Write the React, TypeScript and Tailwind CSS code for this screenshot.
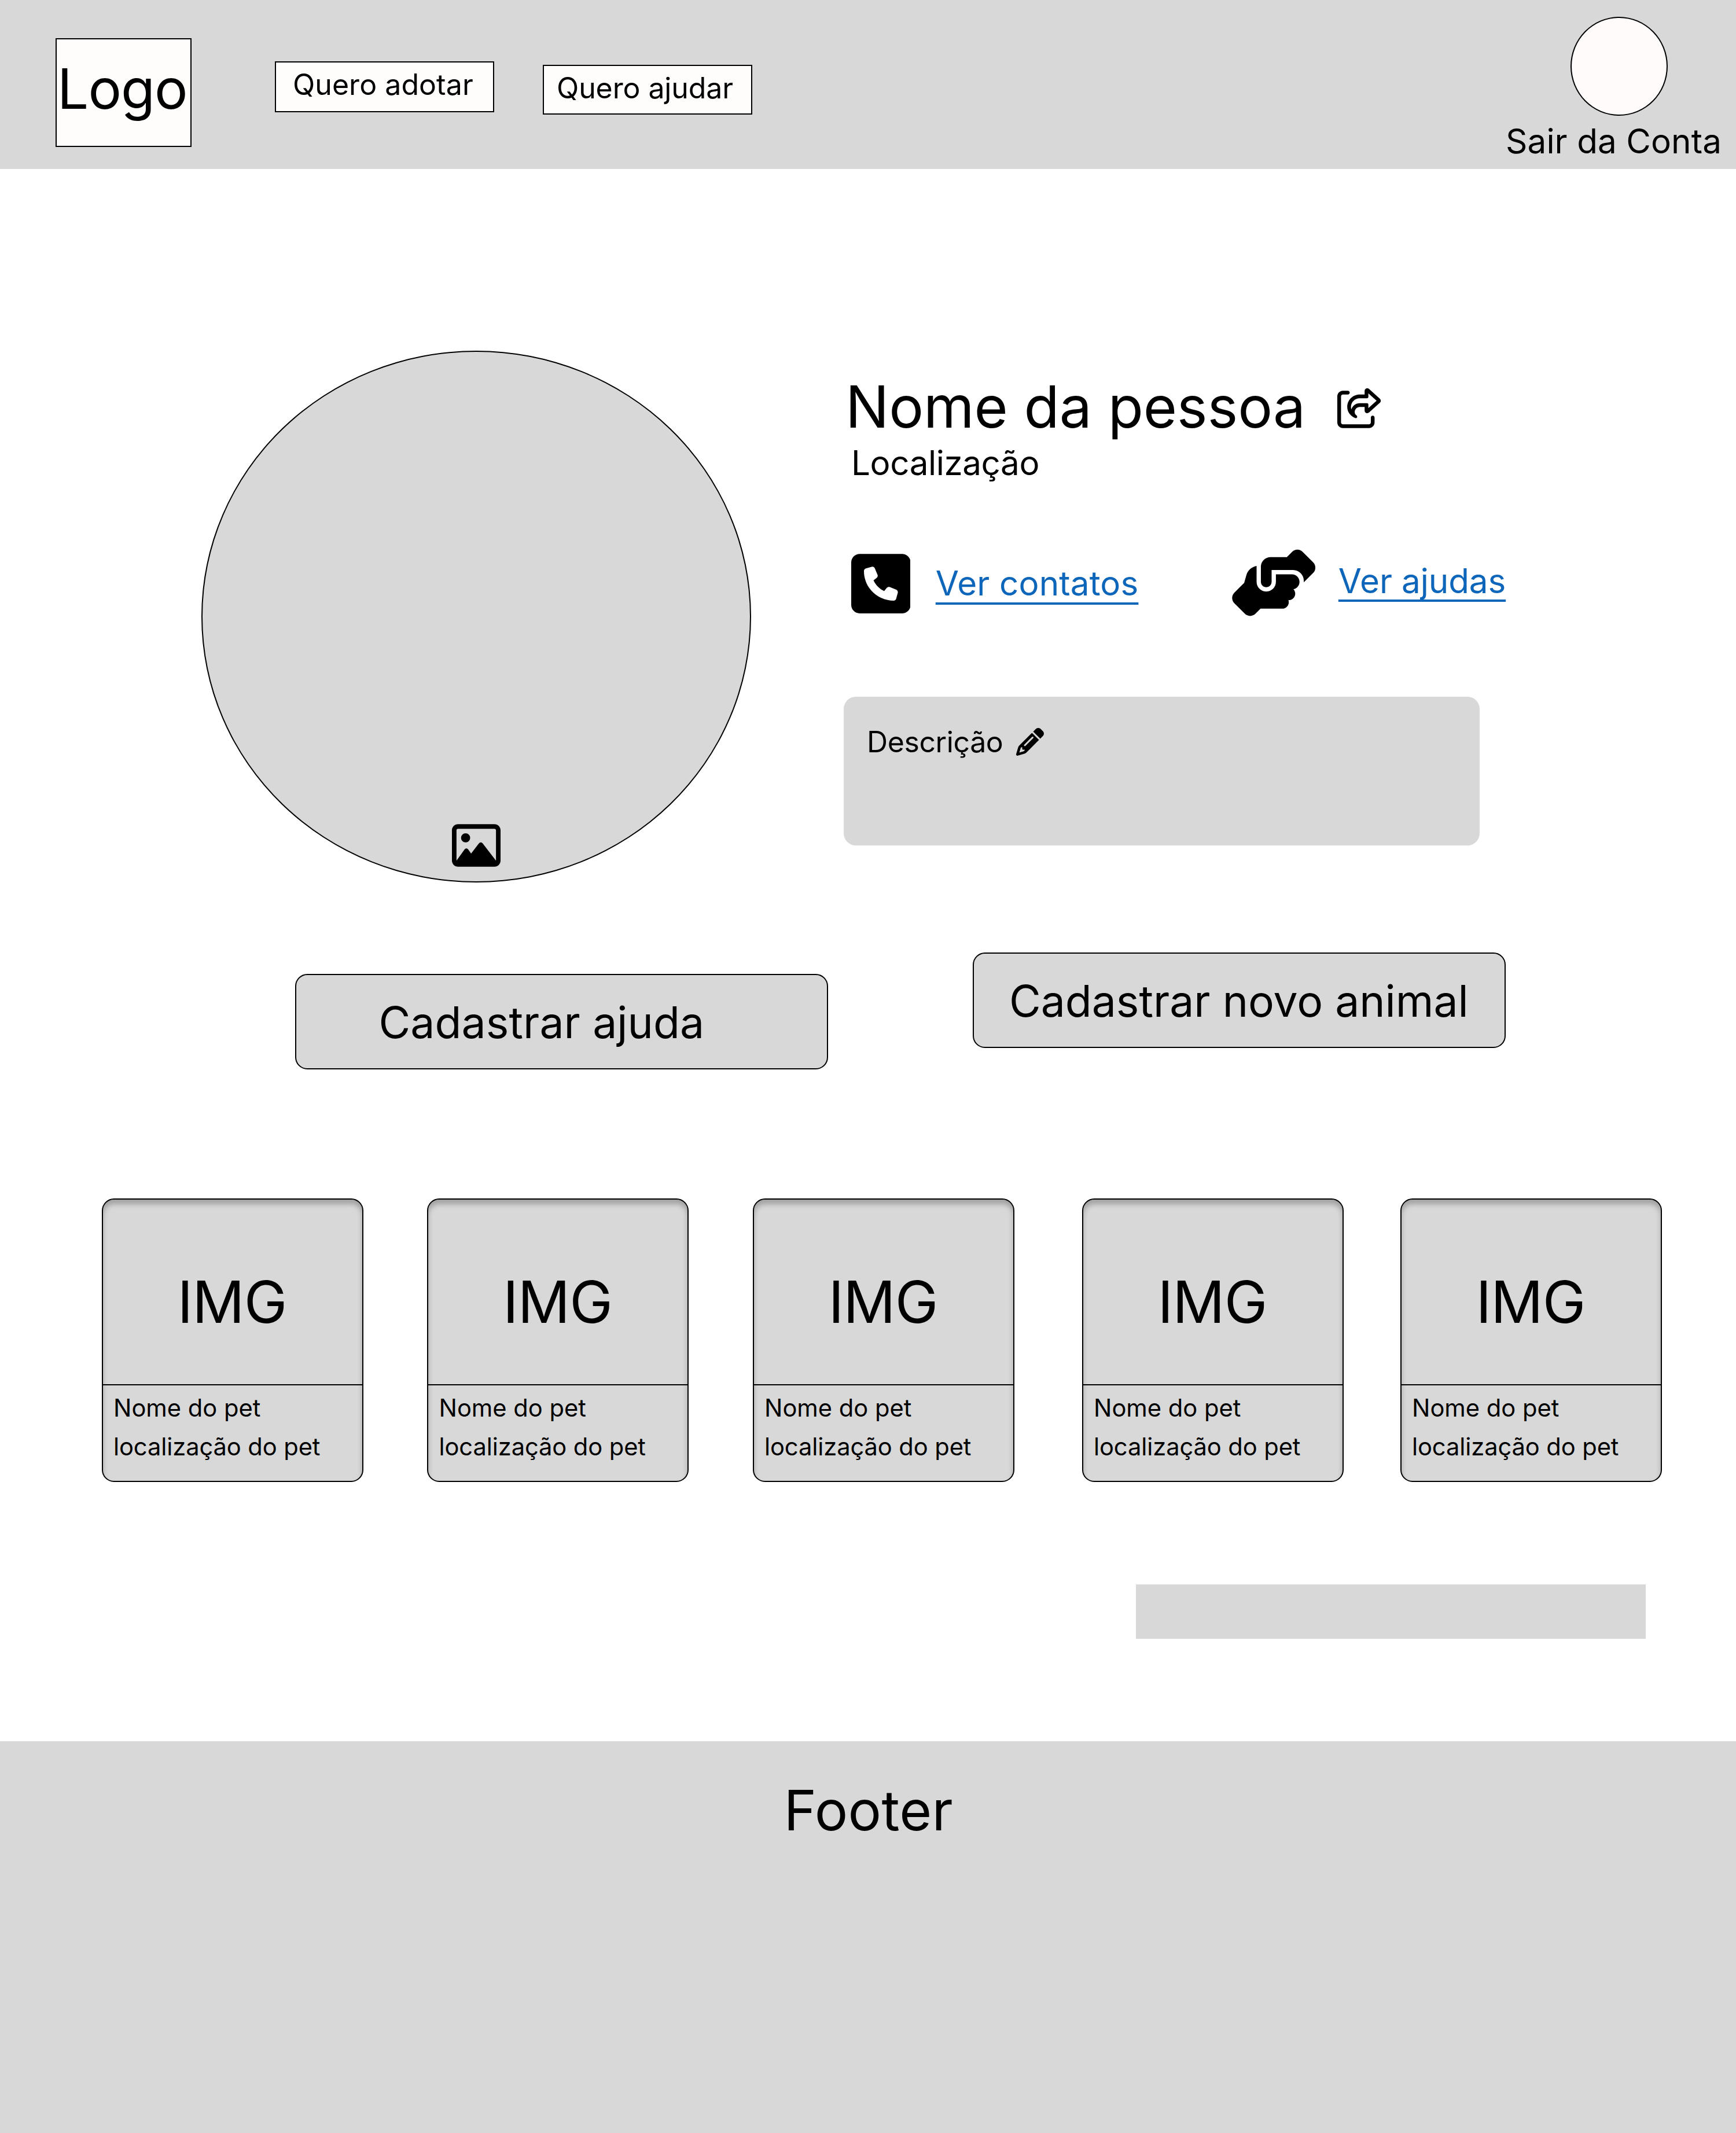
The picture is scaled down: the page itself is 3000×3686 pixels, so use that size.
import { FaHandshakeAngle, FaPencil, FaRegImage, FaRegShareFromSquare, FaSquarePhone } from 'react-icons/fa6';

function Header() {
  return (
    <header className="flex h-[291.5px] items-start bg-[#d8d8d8] pl-[96px]">
      <div className="mt-[66px] h-[188px] w-[235px] border-2 border-black bg-[#fffdfc] pt-[35px]">
        <span className="block pl-px text-[96px] leading-[100px] tracking-[-0.9px] whitespace-nowrap">Logo</span>
      </div>
      <nav className="flex items-start">
        <a className="mt-[106px] ml-[144px] block h-[88px] w-[379px] border-2 border-black bg-[#fffdfc] pt-[8px] pl-[29px] text-[50px] leading-[60px] tracking-[0.05px] whitespace-nowrap">
          Quero adotar
        </a>
        <a className="mt-[112px] ml-[84px] block h-[86px] w-[362px] border-2 border-black bg-[#fffdfc] pt-[8px] pl-[22px] text-[50px] leading-[60px] tracking-[-0.1px] whitespace-nowrap">
          Quero ajudar
        </a>
      </nav>
      <div className="mt-[29px] ml-auto flex w-[398px] flex-col items-start">
        <div className="ml-[112px] h-[171px] w-[168px] rounded-[50%] border-2 border-black bg-[#fffbfb]" />
        <span className="mt-[14px] text-[58.33px] leading-[60px] tracking-[0.1px] whitespace-nowrap">Sair da Conta</span>
      </div>
    </header>
  );
}

function Profile() {
  return (
    <section className="flex h-[1233.5px] items-start">
      <div className="mt-[314.5px] ml-[348px] flex h-[919px] w-[950px] items-end justify-center rounded-[50%] border-2 border-black bg-[#d8d8d8] pb-[20.5px]">
        <FaRegImage className="h-[84px] w-[84px]" />
      </div>
      <div className="mt-[351.5px] ml-[160px]">
        <div className="flex items-start">
          <h1 className="ml-[3px] w-[849.5px] text-[100px] leading-[120px] tracking-[-0.15px] whitespace-nowrap">Nome da pessoa</h1>
          <FaRegShareFromSquare className="mt-[28px] h-[68.7px] w-[77.3px]" />
        </div>
        <p className="mt-[2px] ml-[13px] text-[58.33px] leading-[70px] tracking-[-0.4px]">Localização</p>
        <div className="mt-[113px] flex h-[120px] items-start">
          <FaSquarePhone className="mt-[2px] ml-[12.6px] h-[117.3px] w-[102.6px]" />
          <a className="mt-[25px] ml-[43.6px] w-[350.5px] text-[58.33px] leading-[70px] tracking-[0.15px] whitespace-nowrap text-[#0d66ba] underline decoration-[4px] underline-offset-[12px] [text-decoration-skip-ink:none]">
            Ver contatos
          </a>
          <FaHandshakeAngle className="ml-[159.8px] h-[118.7px] w-[148.4px]" />
          <a className="mt-[21px] ml-[37.4px] text-[58.33px] leading-[70px] tracking-[-0.1px] whitespace-nowrap text-[#0d66ba] underline decoration-[4px] underline-offset-[11px] [text-decoration-skip-ink:none]">
            Ver ajudas
          </a>
        </div>
        <div className="mt-[136px] flex h-[257px] w-[1098.5px] items-start rounded-[21px] bg-[#d8d8d8] pt-[48px] pl-[40px]">
          <p className="w-[258px] text-[50px] leading-[60px] tracking-[-0.4px]">Descrição</p>
          <FaPencil className="mt-[6px] h-[48px] w-[48px]" />
        </div>
      </div>
    </section>
  );
}

function Actions() {
  return (
    <div className="mt-[121px] ml-[510.4px] flex items-start">
      <button className="mt-[37px] h-[165px] w-[920.5px] rounded-[21px] border-2 border-black bg-[#d8d8d8] pt-[2px] pl-[142px] text-left text-[75px] leading-[90px] tracking-[0.1px] whitespace-nowrap">
        Cadastrar ajuda
      </button>
      <button className="ml-[250.5px] h-[165px] w-[920.5px] rounded-[21px] border-2 border-black bg-[#d8d8d8] pt-[2px] pl-[60.5px] text-left text-[75px] leading-[90px] whitespace-nowrap">
        Cadastrar novo animal
      </button>
    </div>
  );
}

const cardMargins = ['ml-[175.5px]', 'ml-[110.5px]', 'ml-[110.5px]', 'ml-[117px]', 'ml-[98px]'];

function PetCard({ margin }: { margin: string }) {
  return (
    <article className={`h-[490px] w-[452px] shrink-0 rounded-[21px] border-2 border-black bg-[#d8d8d8] shadow-[inset_0_8px_8px_rgba(0,0,0,0.25)] ${margin}`}>
      <div className="h-[321px] border-b-2 border-black pt-[117px] pl-[129px] text-[100px] leading-[120px] tracking-[-1px]">IMG</div>
      <div className="pt-[14px] pl-[18.5px] text-[41.67px] leading-[50px] whitespace-nowrap">
        <p>Nome do pet</p>
        <p className="mt-[17px] tracking-[-0.1px]">localização do pet</p>
      </div>
    </article>
  );
}

export default function App() {
  return (
    <div className="flex h-[3686px] w-[3000px] flex-col overflow-hidden bg-white font-['Inter',sans-serif] text-black">
      <Header />
      <Profile />
      <Actions />
      <div className="mt-[223px] flex">
        {cardMargins.map((margin, i) => (
          <PetCard key={i} margin={margin} />
        ))}
      </div>
      <div className="mt-[177px] ml-[1962.5px] h-[94px] w-[881px] shrink-0 bg-[#d8d8d8]" />
      <footer className="mt-[177px] flex-1 bg-[#d8d8d8] pt-[61px] pl-[1354.5px] text-[96px] leading-[116px] tracking-[0.3px]">Footer</footer>
    </div>
  );
}
